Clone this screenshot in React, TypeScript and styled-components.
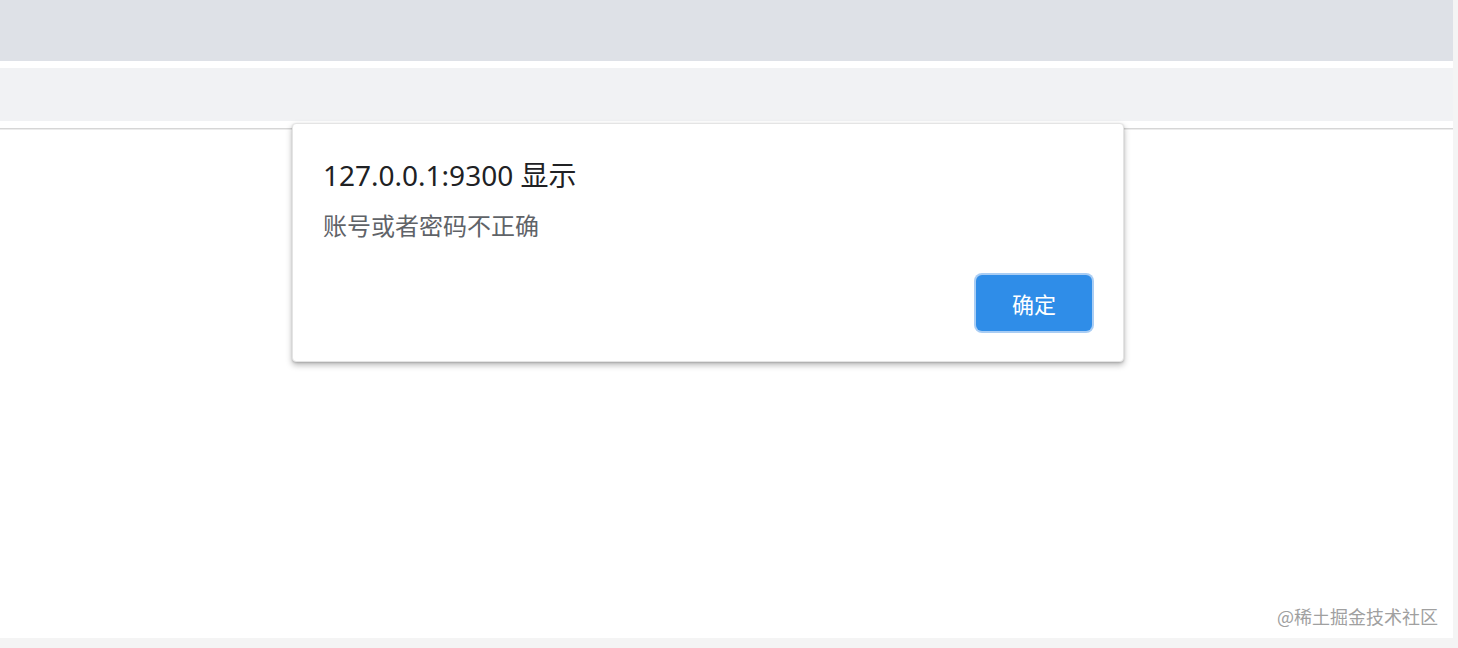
import React from 'react';
import styled, { createGlobalStyle } from 'styled-components';

const GlobalStyle = createGlobalStyle`
  html, body {
    margin: 0;
    padding: 0;
    width: 100%;
    height: 100%;
    overflow: hidden;
  }
  body {
    font-family: 'Noto Sans', 'Noto Sans CJK SC', sans-serif;
    background: #f4f4f4;
  }
  #root {
    height: 100%;
  }
`;

const Screen = styled.div`
  position: relative;
  display: flex;
  width: 1458px;
  height: 648px;
  background: #f4f4f4;
`;

const Window = styled.div`
  display: flex;
  flex-direction: column;
  width: 1453px;
  height: 638px;
  background: #ffffff;
`;

const TopBar = styled.div`
  height: 61px;
  flex-shrink: 0;
  background: #dee1e7;
`;

const TabStrip = styled.div`
  height: 53px;
  flex-shrink: 0;
  margin-top: 7px;
  background: #f1f2f4;
`;

const Content = styled.div`
  flex: 1;
  margin-top: 7px;
  border-top: 1px solid #d6d6d6;
  box-shadow: inset 0 1px 0 #ececec;
  background: #ffffff;
`;

const Dialog = styled.div`
  position: absolute;
  left: 292px;
  top: 123px;
  width: 832px;
  height: 239px;
  box-sizing: border-box;
  padding: 30px 31px 30px 30px;
  display: flex;
  flex-direction: column;
  background: #ffffff;
  border-radius: 4px;
  border: 1px solid #e4e4e4;
  box-shadow: 0 3px 6px rgba(0, 0, 0, 0.28), 0 1px 2px rgba(0, 0, 0, 0.15);
`;

const Title = styled.div`
  font-size: 28px;
  line-height: 40px;
  color: #202124;
  margin-top: 1px;
`;

const Message = styled.div`
  font-size: 24px;
  line-height: 34px;
  color: #5f6368;
  margin-top: 14px;
`;

const Actions = styled.div`
  margin-top: auto;
  display: flex;
  justify-content: flex-end;
`;

const OkButton = styled.button`
  width: 116px;
  height: 56px;
  box-sizing: border-box;
  border: none;
  border-radius: 6px;
  background: #2f8de8;
  box-shadow: 0 0 0 2px #a9cdf4;
  color: #ffffff;
  font-family: 'Noto Sans CJK SC', sans-serif;
  font-size: 22px;
  cursor: pointer;
`;

const Watermark = styled.div`
  position: absolute;
  right: 20px;
  top: 603px;
  font-family: 'Noto Sans CJK SC', sans-serif;
  font-size: 18px;
  line-height: 26px;
  color: #a0a0a0;
`;

export default function App() {
  return (
    <>
      <GlobalStyle />
      <Screen>
        <Window>
          <TopBar />
          <TabStrip />
          <Content />
        </Window>
        <Dialog role="alertdialog">
          <Title>127.0.0.1:9300 显示</Title>
          <Message>账号或者密码不正确</Message>
          <Actions>
            <OkButton>确定</OkButton>
          </Actions>
        </Dialog>
        <Watermark>@稀土掘金技术社区</Watermark>
      </Screen>
    </>
  );
}
